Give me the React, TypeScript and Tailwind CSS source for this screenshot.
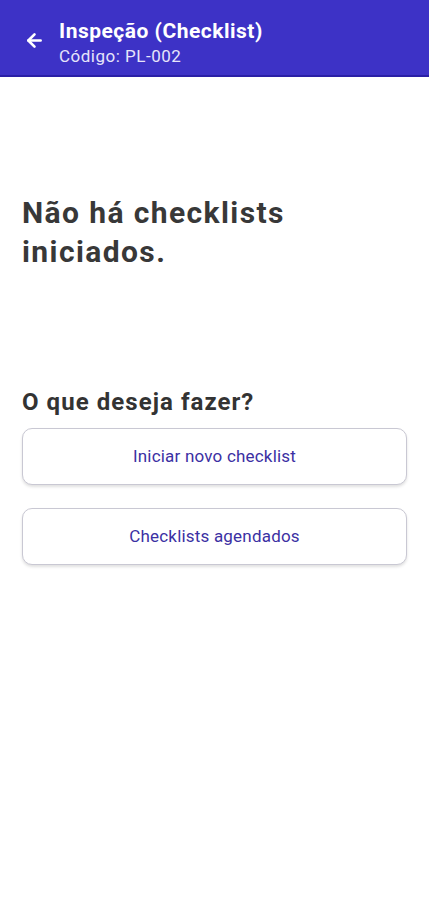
import { ArrowLeft } from 'lucide-react';

const App = () => {
  return (
    <div className="min-h-[900px] bg-white font-['Roboto',sans-serif]">
      {/* Header */}
      <div className="flex h-[77px] items-start border-b-2 border-[#2a1fa6] bg-[#3d32c6] pl-[24px] pt-[17px]">
        <ArrowLeft className="mt-[13px] h-[21px] w-[21px] text-white" strokeWidth={3} />
        <div className="ml-[14px] flex flex-col">
          <span className="text-[21px] font-bold leading-[28px] tracking-[0.5px] text-white">Inspeção (Checklist)</span>
          <span className="text-[17px] leading-[22px] tracking-[0.5px] text-[#e6e4fa]">Código: PL-002</span>
        </div>
      </div>

      <div className="px-[22px]">
        <h1 className="mt-[116px] text-[30px] font-bold leading-[39px] tracking-[1.4px] text-[#383838]">
          Não há checklists
          <br />
          iniciados.
        </h1>

        <h2 className="mt-[116px] text-[24px] font-bold leading-[30px] tracking-[1.05px] text-[#333333]">O que deseja fazer?</h2>

        <div className="mt-[11px] flex flex-col gap-[23px]">
          <button className="flex h-[57px] items-center justify-center rounded-[10px] border border-[#c9c8d3] bg-white text-[17px] tracking-[0.2px] text-[#3b30a3] shadow-[0_2px_3px_rgba(0,0,0,0.12)]">
            Iniciar novo checklist
          </button>
          <button className="flex h-[57px] items-center justify-center rounded-[10px] border border-[#c9c8d3] bg-white text-[17px] tracking-[0.2px] text-[#3b30a3] shadow-[0_2px_3px_rgba(0,0,0,0.12)]">
            Checklists agendados
          </button>
        </div>
      </div>
    </div>
  );
};

export default App;
